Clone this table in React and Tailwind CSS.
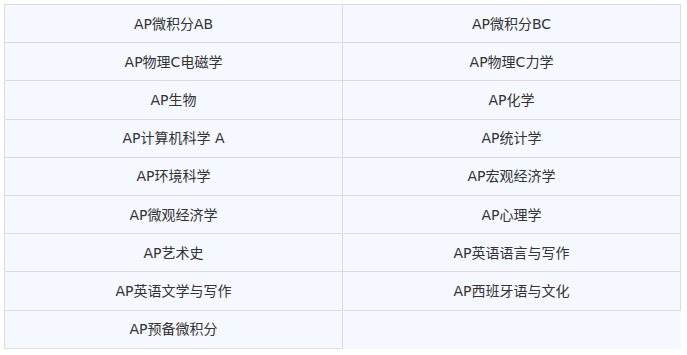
const rows = [
  ["AP微积分AB", "AP微积分BC"],
  ["AP物理C电磁学", "AP物理C力学"],
  ["AP生物", "AP化学"],
  ["AP计算机科学 A", "AP统计学"],
  ["AP环境科学", "AP宏观经济学"],
  ["AP微观经济学", "AP心理学"],
  ["AP艺术史", "AP英语语言与写作"],
  ["AP英语文学与写作", "AP西班牙语与文化"],
  ["AP预备微积分"],
];

export default function App() {
  return (
    <div className="w-[687px] h-[355px] bg-white pt-[4px] pl-[4px] font-['DejaVu_Sans','Noto_Sans_CJK_SC',sans-serif]">
      <table className="w-[677px] border-collapse bg-[#f5f8fe] text-[14px] text-[#333]">
        <tbody>
          {rows.map((row, i) => (
            <tr key={i} className="h-[38.2px]">
              {row.map((name) => (
                <td
                  key={name}
                  className="w-1/2 border border-[#dcdcdc] text-center leading-[20px] p-0"
                >
                  {name}
                </td>
              ))}
            </tr>
          ))}
        </tbody>
      </table>
    </div>
  );
}
